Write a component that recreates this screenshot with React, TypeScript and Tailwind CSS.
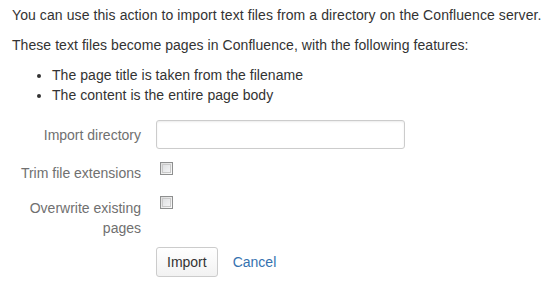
import React from 'react';

const Checkbox: React.FC<{ className?: string }> = ({ className = '' }) => (
  <span
    className={`block w-[13px] h-[13px] border border-[#8e8f8f] bg-gradient-to-br from-[#dcdcdc] to-[#fbfbfb] p-[1px] ${className}`}
  >
    <span className="block w-full h-full border border-[#c9c9c9] bg-gradient-to-br from-[#dfe0e2] to-[#f4f4f5]" />
  </span>
);

export default function App() {
  return (
    <div
      className="w-[554px] h-[293px] bg-white pl-[12px] pt-[5px] text-[14px] leading-[20px] text-[#333333]"
      style={{ fontFamily: '"Liberation Sans", Arial, sans-serif' }}
    >
      <p className="tracking-[0.09px]">You can use this action to import text files from a directory on the Confluence server.</p>
      <p className="mt-[10px] tracking-[0.06px]">These text files become pages in Confluence, with the following features:</p>
      <ul className="mt-[10px] list-disc pl-[40px] tracking-[0.05px]">
        <li>The page title is taken from the filename</li>
        <li>The content is the entire page body</li>
      </ul>

      {/* form */}
      <div className="mt-[15px] flex items-start">
        <label className="w-[129px] shrink-0 pt-[5px] text-right text-[#707070]">Import directory</label>
        <input
          type="text"
          className="ml-[15px] w-[249px] h-[29px] rounded-[3px] border border-[#cccccc] bg-white px-2 shadow-[inset_0_1px_2px_rgba(0,0,0,0.08)] outline-none"
        />
      </div>

      <div className="mt-[9px] flex items-start">
        <label className="w-[129px] shrink-0 pt-[5px] text-right text-[#707070]">Trim file extensions</label>
        <Checkbox className="ml-[19px] mt-[4px]" />
      </div>

      <div className="mt-[10px] flex items-start">
        <label className="w-[129px] shrink-0 pt-[5px] text-right text-[#707070]">Overwrite existing pages</label>
        <Checkbox className="ml-[19px] mt-[3px]" />
      </div>

      <div className="mt-[9px] flex items-center pl-[144px]">
        <button className="h-[30px] rounded-[3px] border border-[#cccccc] bg-gradient-to-b from-white to-[#f2f2f2] px-[10px] text-[#333333]">
          Import
        </button>
        <a href="#" className="ml-[15px] text-[#3572b0]">
          Cancel
        </a>
      </div>
    </div>
  );
}
